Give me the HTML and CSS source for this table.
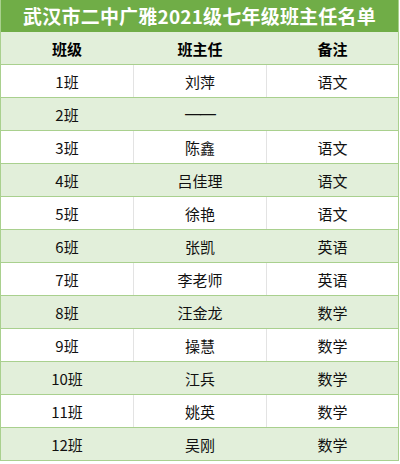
FILE: index.html
```html
<!DOCTYPE html>
<html lang="zh-CN">
<head>
<meta charset="utf-8">
<title>武汉市二中广雅2021级七年级班主任名单</title>
<link rel="stylesheet" href="styles.css">
</head>
<body>
<div class="sheet">
  <div class="title">武汉市二中广雅2021级七年级班主任名单</div>
  <div class="row head"><div class="cell">班级</div><div class="cell">班主任</div><div class="cell">备注</div></div>
  <div class="row"><div class="cell">1班</div><div class="cell">刘萍</div><div class="cell">语文</div></div>
  <div class="row alt"><div class="cell">2班</div><div class="cell"><span class="dash">——</span></div><div class="cell"></div></div>
  <div class="row"><div class="cell">3班</div><div class="cell">陈鑫</div><div class="cell">语文</div></div>
  <div class="row alt"><div class="cell">4班</div><div class="cell">吕佳理</div><div class="cell">语文</div></div>
  <div class="row"><div class="cell">5班</div><div class="cell">徐艳</div><div class="cell">语文</div></div>
  <div class="row alt"><div class="cell">6班</div><div class="cell">张凯</div><div class="cell">英语</div></div>
  <div class="row"><div class="cell">7班</div><div class="cell">李老师</div><div class="cell">英语</div></div>
  <div class="row alt"><div class="cell">8班</div><div class="cell">汪金龙</div><div class="cell">数学</div></div>
  <div class="row"><div class="cell">9班</div><div class="cell">操慧</div><div class="cell">数学</div></div>
  <div class="row alt"><div class="cell">10班</div><div class="cell">江兵</div><div class="cell">数学</div></div>
  <div class="row"><div class="cell">11班</div><div class="cell">姚英</div><div class="cell">数学</div></div>
  <div class="row alt"><div class="cell">12班</div><div class="cell">吴刚</div><div class="cell">数学</div></div>
</div>
</body>
</html>
```
FILE: styles.css
```css
html, body {
  margin: 0;
  padding: 0;
  background: #ffffff;
}
body {
  font-family: "Noto Sans CJK SC", "Noto Sans", sans-serif;
  color: #111111;
}
.sheet {
  width: 399px;
  border-left: 1px solid #a9d08e;
  border-right: 1px solid #a9d08e;
  box-sizing: border-box;
}
.title {
  height: 32px;
  background: #70ad47;
  color: #ffffff;
  font-weight: 700;
  font-size: 19px;
  line-height: 32px;
  text-align: center;
  letter-spacing: 0.2px;
}
.row {
  display: grid;
  grid-template-columns: 133px 133px 1fr;
  height: 33px;
  box-sizing: border-box;
  border-bottom: 1px solid #a9d08e;
  background: #ffffff;
}
.row.alt, .row.head {
  background: #e2efda;
}
.cell {
  display: flex;
  align-items: center;
  justify-content: center;
  font-size: 15px;
  border-right: 1px solid #e3e3e3;
}
.cell:last-child {
  border-right: none;
}
.row.alt .cell, .row.head .cell {
  border-right-color: #e2efda;
}
.row.head .cell {
  font-weight: 700;
  color: #000000;
}
.dash {
  font-family: "Liberation Sans", sans-serif;
  font-size: 16px;
  letter-spacing: -1px;
}
```
